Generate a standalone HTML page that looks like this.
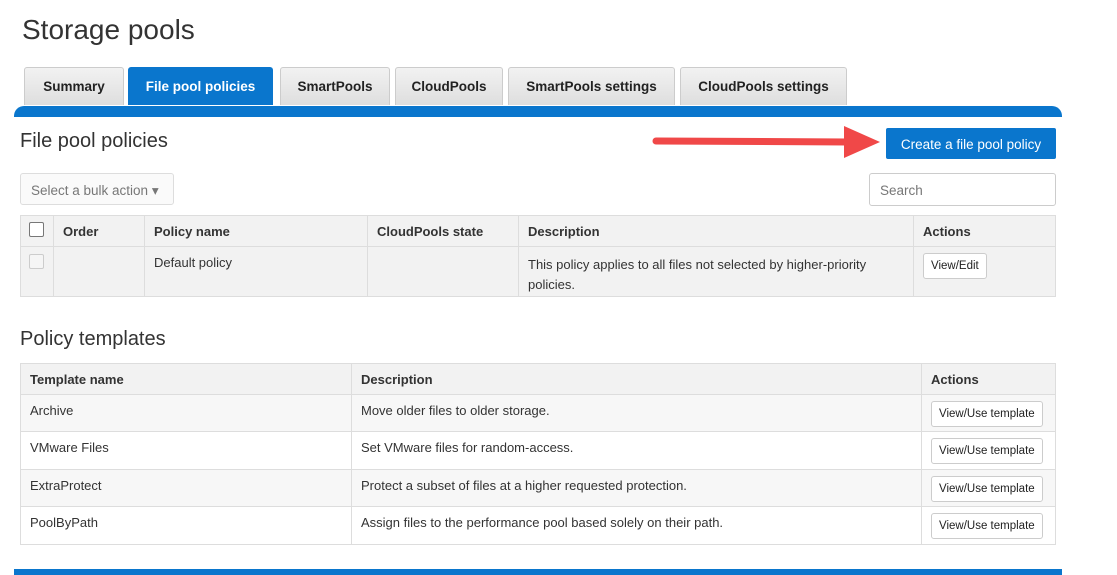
<!DOCTYPE html>
<html><head><style>
body{margin:0;width:1117px;height:575px;background:#fff;font-family:"Liberation Sans",sans-serif;color:#333;position:relative;overflow:hidden;font-size:13px}
.a{position:absolute}
h1{position:absolute;left:22px;top:14px;margin:0;font-weight:normal;font-size:28px;color:#333}
.tab{position:absolute;top:67px;height:38px;background:linear-gradient(#f2f2f2,#dedede);border:1px solid #ccc;border-bottom:none;box-sizing:border-box;font-weight:bold;font-size:13.5px;color:#222;text-align:center;line-height:38px;border-radius:3px 3px 0 0}
.tab.on{background:#0a76cd;color:#fff;border-color:#0a76cd}
.bar{left:14px;top:106px;width:1048px;height:11px;background:#0a76cd;border-radius:10px 10px 0 0}
table{position:absolute;border-collapse:collapse;font-size:13px;table-layout:fixed}
td,th{border:1px solid #ddd;padding:0 9px;text-align:left;vertical-align:top;box-sizing:border-box}
th{background:#f2f2f2;font-weight:bold;color:#333;vertical-align:middle}
.btn{display:inline-block;white-space:nowrap;border:1px solid #ccc;background:#fff;border-radius:3px;font-size:11.5px;padding:0 7px;line-height:24px;color:#222}
.cb{display:inline-block;width:13px;height:13px;border:1px solid #999;border-radius:2px;background:#fff}
</style></head><body>
<h1>Storage pools</h1>
<div class="tab" style="left:24px;width:100px">Summary</div>
<div class="tab on" style="left:128px;width:145px">File pool policies</div>
<div class="tab" style="left:280px;width:110px">SmartPools</div>
<div class="tab" style="left:395px;width:108px">CloudPools</div>
<div class="tab" style="left:508px;width:167px">SmartPools settings</div>
<div class="tab" style="left:680px;width:167px">CloudPools settings</div>
<div class="a bar"></div>
<div class="a" style="left:20px;top:130px;font-size:20px;color:#333">File pool policies</div>
<div class="a" style="left:886px;top:128px;width:170px;height:31px;background:#0a76cd;color:#fff;border-radius:2px;line-height:33px;text-align:center;font-size:13.5px">Create a file pool policy</div>
<svg class="a" style="left:648px;top:122px" width="236" height="40"><path d="M8 19 L200 20" stroke="#f04848" stroke-width="7" stroke-linecap="round"/><path d="M196 4 L232 20 L196 36 Z" fill="#f04848"/></svg>
<div class="a" style="left:20px;top:173px;width:154px;height:32px;border:1px solid #ddd;border-radius:3px;background:#fafafa;color:#777;line-height:33px;font-size:13.5px;padding-left:10px;box-sizing:border-box">Select a bulk action ▾</div>
<div class="a" style="left:869px;top:173px;width:187px;height:33px;border:1px solid #ccc;border-radius:3px;color:#777;line-height:33px;font-size:13.5px;padding-left:10px;box-sizing:border-box">Search</div>
<table style="left:20px;top:215px;width:1036px">
<tr style="height:31px"><th style="width:33px;padding:0 8px"><span class="cb" style="border-color:#777"></span></th><th style="width:91px">Order</th><th style="width:223px">Policy name</th><th style="width:151px">CloudPools state</th><th style="width:395px">Description</th><th>Actions</th></tr>
<tr style="height:50px;background:#f2f2f2"><td style="padding:7px 8px"><span class="cb" style="border-color:#ccc;background:#f5f5f5"></span></td><td></td><td style="padding-top:8px">Default policy</td><td></td><td style="padding-top:8px;line-height:20px">This policy applies to all files not selected by higher-priority policies.</td><td style="padding-top:6px"><span class="btn">View/Edit</span></td></tr>
</table>
<div class="a" style="left:20px;top:328px;font-size:20px;color:#333">Policy templates</div>
<table style="left:20px;top:363px;width:1036px">
<tr style="height:31px"><th style="width:331px">Template name</th><th style="width:570px">Description</th><th>Actions</th></tr>
<tr style="height:37px;background:#f7f7f7"><td style="padding-top:8px">Archive</td><td style="padding-top:8px">Move older files to older storage.</td><td style="padding-top:6px"><span class="btn">View/Use template</span></td></tr>
<tr style="height:38px"><td style="padding-top:8px">VMware Files</td><td style="padding-top:8px">Set VMware files for random-access.</td><td style="padding-top:6px"><span class="btn">View/Use template</span></td></tr>
<tr style="height:37px;background:#f7f7f7"><td style="padding-top:8px">ExtraProtect</td><td style="padding-top:8px">Protect a subset of files at a higher requested protection.</td><td style="padding-top:6px"><span class="btn">View/Use template</span></td></tr>
<tr style="height:38px"><td style="padding-top:8px">PoolByPath</td><td style="padding-top:8px">Assign files to the performance pool based solely on their path.</td><td style="padding-top:6px"><span class="btn">View/Use template</span></td></tr>
</table>
<div class="a" style="left:14px;top:569px;width:1048px;height:6px;background:#0a76cd"></div>
</body></html>
